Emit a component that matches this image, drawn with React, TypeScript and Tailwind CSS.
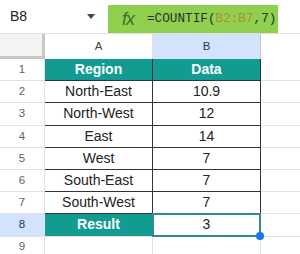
const rows: { a: string; b: string; head?: boolean }[] = [
  { a: 'Region', b: 'Data', head: true },
  { a: 'North-East', b: '10.9' },
  { a: 'North-West', b: '12' },
  { a: 'East', b: '14' },
  { a: 'West', b: '7' },
  { a: 'South-East', b: '7' },
  { a: 'South-West', b: '7' },
];

function RowNum({ n, active = false }: { n: number; active?: boolean }) {
  return (
    <div
      className={`flex w-[45px] shrink-0 items-center justify-center border-r border-b border-[#e1e1e1] text-[11.5px] ${
        active ? 'bg-[#d3e3fd] text-[#1f3a68]' : 'bg-white text-[#5f6368]'
      }`}
    >
      {n}
    </div>
  );
}

export default function App() {
  return (
    <div className="h-[254px] w-[300px] overflow-hidden bg-white font-['Liberation_Sans',Arial,sans-serif] text-[#222]">
      {/* name box + formula bar */}
      <div className="flex h-[34px] border-b border-[#e0e0e0] pt-[5px]">
        <div className="-mt-[5px] flex w-[108px] items-center pr-[13px] pl-[10px] text-[14px]">
          <span className="flex-1">B8</span>
          <div className="h-0 w-0 border-x-[4px] border-t-[5px] border-x-transparent border-t-[#444]" />
        </div>
        <div className="flex h-[28px] w-[170px] items-center bg-[#8fd14f] pl-[14px]">
          <span className="w-[25px] text-[18px] italic leading-none tracking-[-1px] text-[#3f6f22]">
            fx
          </span>
          <span className="font-['Liberation_Mono',monospace] text-[12.7px] text-[#2e2e2e]">
            =COUNTIF(<span className="text-[#b98a2c]">B2:B7</span>,7)
          </span>
        </div>
      </div>

      {/* column headers */}
      <div className="flex h-[25px]">
        <div className="w-[45px] shrink-0 border-r-[3px] border-b-[3px] border-[#c7c7c7] bg-[#f3f3f3]" />
        <div className="flex w-[108px] shrink-0 items-center justify-center border-r border-[#e1e1e1] text-[11.5px] text-[#444]">
          A
        </div>
        <div className="flex w-[108px] shrink-0 items-center justify-center border-r border-[#c7c7c7] bg-[#d3e3fd] text-[11.5px] text-[#1f3a68]">
          B
        </div>
        <div className="flex-1" />
      </div>

      {/* data rows */}
      {rows.map((r, i) => (
        <div key={i} className="flex h-[22.2px]">
          <RowNum n={i + 1} />
          <div
            className={`flex w-[108px] shrink-0 items-center justify-center border-r border-b border-[#333] text-[14px] ${
              r.head ? 'bg-[#129c91] font-bold text-white' : ''
            }`}
          >
            {r.a}
          </div>
          <div
            className={`flex w-[108px] shrink-0 items-center justify-center border-r border-b border-[#333] text-[14px] ${
              r.head ? 'bg-[#129c91] font-bold text-white' : ''
            }`}
          >
            {r.b}
          </div>
          <div className="flex-1 border-b border-[#e1e1e1]" />
        </div>
      ))}

      {/* result row */}
      <div className="flex h-[22.2px]">
        <RowNum n={8} active />
        <div className="flex w-[108px] shrink-0 items-center justify-center border-r border-b border-[#e1e1e1] bg-[#129c91] text-[14px] font-bold text-white">
          Result
        </div>
        <div className="relative flex w-[108px] shrink-0 items-center justify-center border-r border-b border-[#e1e1e1] text-[14px]">
          3
          <div className="absolute -inset-[1px] border-2 border-[#2e8c96]" />
          <div className="absolute -right-[4px] -bottom-[4px] h-[8px] w-[8px] rounded-full bg-[#1a73e8]" />
        </div>
        <div className="flex-1 border-b border-[#e1e1e1]" />
      </div>

      <div className="flex h-[22.2px]">
        <RowNum n={9} />
        <div className="w-[108px] shrink-0 border-r border-b border-[#e1e1e1]" />
        <div className="w-[108px] shrink-0 border-r border-b border-[#e1e1e1]" />
        <div className="flex-1 border-b border-[#e1e1e1]" />
      </div>
    </div>
  );
}
